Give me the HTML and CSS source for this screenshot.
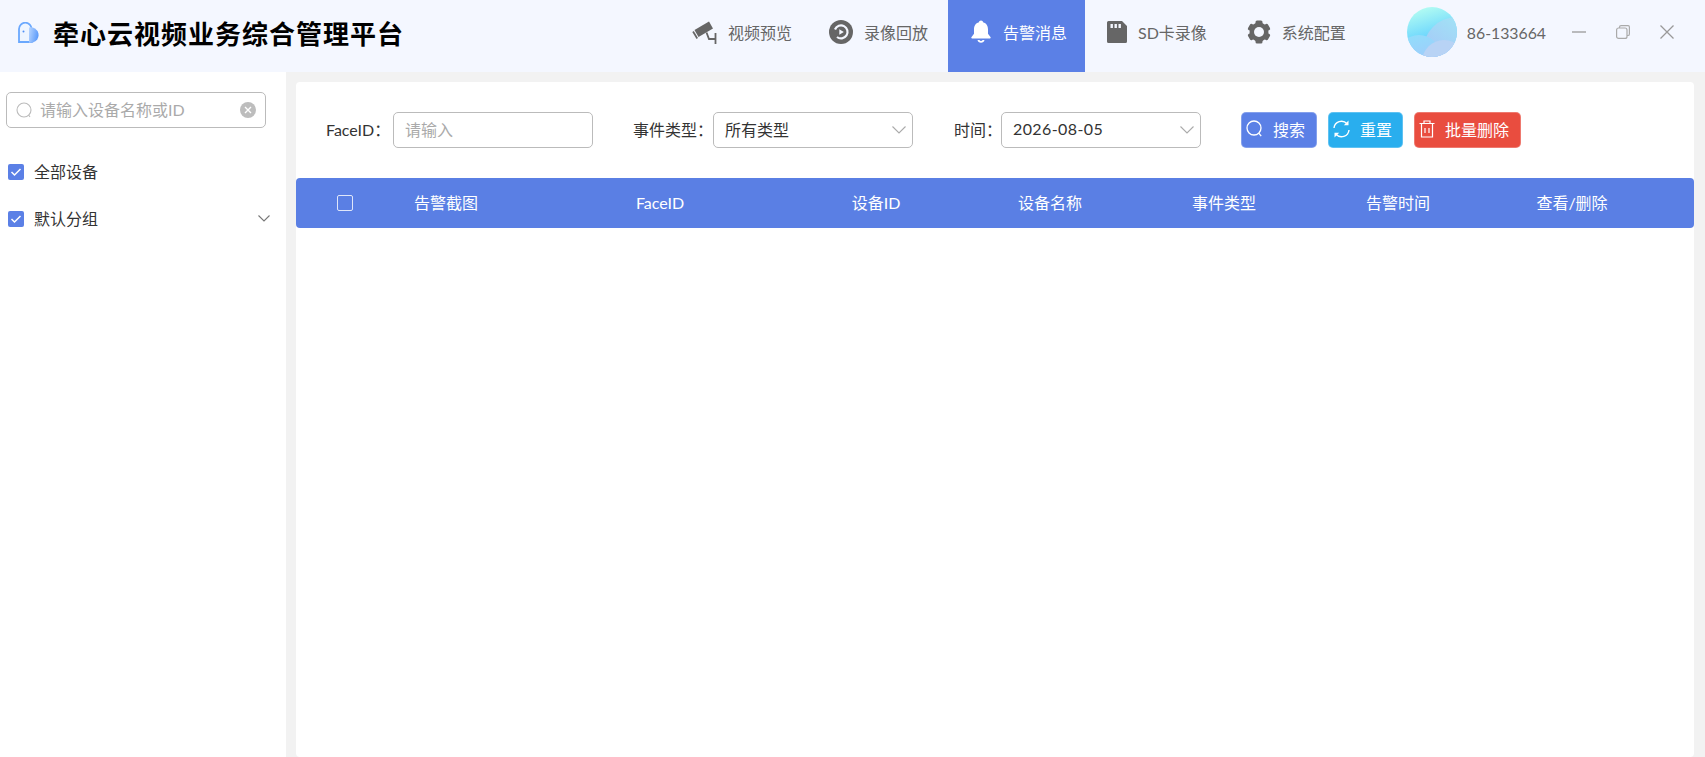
FILE: index.html
```html
<!DOCTYPE html>
<html lang="zh-CN">
<head>
  <meta charset="UTF-8">
  <meta name="viewport" content="width=device-width, initial-scale=1.0">
  <title>牵心云视频业务综合管理平台</title>
  <link rel="stylesheet" href="styles.css">
</head>
<body>
  <!-- Header Section -->
  <div class="header">
    <div class="brand">
      <svg class="logo" width="22" height="21" viewBox="0 0 22 21">
        <defs>
          <linearGradient id="logoBlue" x1="0" y1="0" x2="1" y2="0.300">
            <stop offset="0" stop-color="#b9d6ff"/>
            <stop offset="1" stop-color="#5f9dfb"/>
          </linearGradient>
        </defs>
        <path d="M1 20V7a6.300 6.300 0 0 1 12.600 0V20z" fill="#eef5ff" stroke="#6aa8fe" stroke-width="1.800"/>
        <path d="M11 5.500a7.500 7.500 0 0 1 3.500 15.200H11z" fill="url(#logoBlue)"/>
        <circle cx="5.500" cy="9.500" r="1" fill="#4e8ef5"/>
      </svg>
      <h1>牵心云视频业务综合管理平台</h1>
    </div>

    <div class="nav">
      <div class="nav-item">
        <svg width="25" height="23" viewBox="0 0 25 23">
          <path d="M2.500 9 17 0.500l4 7-14.500 8.500z" fill="#666"/>
          <path d="M0.300 11 4.500 18l1.500-0.900-4.200-7z" fill="#666"/>
          <path d="M14.500 11.500 17 18h6.500M23.500 12v11" fill="none" stroke="#666" stroke-width="1.800"/>
        </svg>
        <span>视频预览</span>
      </div>
      <div class="nav-item replay">
        <svg width="24" height="24" viewBox="0 0 24 24">
          <circle cx="12" cy="12" r="12" fill="#666"/>
          <path d="M6 9.500A6.500 6.500 0 1 1 8 17" fill="none" stroke="#f4f7ff" stroke-width="2.200"/>
          <path d="M10.300 9.300v5.400l4.500-2.700z" fill="#f4f7ff"/>
        </svg>
        <span>录像回放</span>
      </div>
      <div class="nav-item active">
        <svg width="20" height="24" viewBox="0 0 20 24">
          <path d="M10 0.500c1.200 0 2 .8 2 1.800 3.600.9 5 3.900 5 7.200v4.200l2.600 3.600c.3.600 0 1.200-.7 1.200H1.100c-.7 0-1-.6-.7-1.200L3 13.700V9.500c0-3.300 1.400-6.300 5-7.200 0-1 .8-1.800 2-1.800z" fill="#fff"/>
          <path d="M6.500 20a3.600 3.600 0 0 0 7 0h-1.900a1.800 1.800 0 0 1-3.200 0z" fill="#fff"/>
        </svg>
        <span>告警消息</span>
      </div>
      <div class="nav-item sdcard">
        <svg width="20" height="22" viewBox="0 0 20 22">
          <path d="M1.500 0H15l5 5v15.500a1.500 1.500 0 0 1-1.500 1.500h-17A1.500 1.500 0 0 1 0 20.500v-19A1.500 1.500 0 0 1 1.500 0z" fill="#666"/>
          <path d="M3.500 3h2.400v4H3.500zM7.500 3h2.400v4H7.500zM11.500 3h2.400v4h-2.400z" fill="#f4f7ff"/>
        </svg>
        <span>SD卡录像</span>
      </div>
      <div class="nav-item">
        <svg width="24" height="24" viewBox="0 0 24 24">
          <g fill="#666">
            <rect x="8.500" y="0.500" width="7" height="23" rx="1.500"/>
            <rect x="8.500" y="0.500" width="7" height="23" rx="1.500" transform="rotate(60 12 12)"/>
            <rect x="8.500" y="0.500" width="7" height="23" rx="1.500" transform="rotate(120 12 12)"/>
            <circle cx="12" cy="12" r="9.500"/>
          </g>
          <circle cx="12" cy="12" r="5" fill="#f4f7ff"/>
        </svg>
        <span>系统配置</span>
      </div>
    </div>

    <div class="user">
      <svg class="avatar" width="50" height="50" viewBox="0 0 50 50">
        <defs>
          <clipPath id="avatarClip"><circle cx="25" cy="25" r="25"/></clipPath>
          <linearGradient id="avatarBg" x1="0.3" y1="0" x2="0.6" y2="1">
            <stop offset="0" stop-color="#b4fdf2"/>
            <stop offset="0.55" stop-color="#70d8fd"/>
            <stop offset="1" stop-color="#7cc8fb"/>
          </linearGradient>
          <linearGradient id="avatarMid" x1="0.9" y1="0" x2="0.3" y2="1">
            <stop offset="0" stop-color="#9feaf5"/>
            <stop offset="1" stop-color="#a9bdf8"/>
          </linearGradient>
          <linearGradient id="avatarLow" x1="0" y1="0" x2="0.3" y2="1">
            <stop offset="0" stop-color="#90e0fb"/>
            <stop offset="1" stop-color="#a5c2fb"/>
          </linearGradient>
        </defs>
        <g clip-path="url(#avatarClip)">
          <rect width="50" height="50" fill="url(#avatarBg)"/>
          <circle cx="50" cy="44" r="34" fill="url(#avatarMid)"/>
          <circle cx="12" cy="50" r="22" fill="url(#avatarLow)"/>
          <circle cx="37" cy="55" r="22" fill="#b8d3f5"/>
        </g>
      </svg>
      <span class="phone">86-133664</span>
      <div class="win-btns">
        <svg width="14" height="14" viewBox="0 0 14 14"><path d="M0 7h14" stroke="#999" stroke-width="1.300"/></svg>
        <svg width="14" height="14" viewBox="0 0 14 14"><rect x="0.600" y="3" width="10.400" height="10.400" rx="2" fill="none" stroke="#aaa" stroke-width="1.200"/><path d="M3.500 3V2.200a1.600 1.600 0 0 1 1.600-1.600h7a1.300 1.300 0 0 1 1.300 1.300v7a1.600 1.600 0 0 1-1.600 1.600H11" fill="none" stroke="#aaa" stroke-width="1.200"/></svg>
        <svg width="14" height="14" viewBox="0 0 14 14"><path d="M0.500 0.500l13 13M13.500 0.500l-13 13" stroke="#999" stroke-width="1.300"/></svg>
      </div>
    </div>
  </div>

  <div class="page">
    <!-- Device Tree -->
    <div class="sidebar">
      <div class="tree-search">
        <svg width="16" height="16" viewBox="0 0 16 16"><circle cx="8" cy="8" r="7" fill="none" stroke="#bbb" stroke-width="1.100"/><path d="M12.500 13l1.500 1.800" stroke="#bbb" stroke-width="1.100"/></svg>
        <input class="tree-input" type="text" placeholder="请输入设备名称或ID">
        <svg width="16" height="16" viewBox="0 0 16 16"><circle cx="8" cy="8" r="8" fill="#bdbdbd"/><path d="M5 5l6 6M11 5l-6 6" stroke="#fff" stroke-width="1.400"/></svg>
      </div>
      <div class="tree-row">
        <span class="check"><svg width="12" height="10" viewBox="0 0 12 10"><path d="M1.500 5l3 3 6-6" fill="none" stroke="#fff" stroke-width="1.500"/></svg></span>
        <span class="tree-text">全部设备</span>
      </div>
      <div class="tree-row">
        <span class="check"><svg width="12" height="10" viewBox="0 0 12 10"><path d="M1.500 5l3 3 6-6" fill="none" stroke="#fff" stroke-width="1.500"/></svg></span>
        <span class="tree-text">默认分组</span>
        <svg class="tree-arrow" width="12" height="7" viewBox="0 0 12 7"><path d="M0.500 0.500 6 6l5.500-5.500" fill="none" stroke="#777" stroke-width="1.100"/></svg>
      </div>
    </div>

    <!-- Alarm List -->
    <div class="main">
      <div class="filters">
        <label class="filter-label">FaceID：</label>
        <div class="field"><span class="placeholder">请输入</span></div>
        <label class="filter-label type-label">事件类型：</label>
        <div class="field">
          <span>所有类型</span>
          <svg class="arrow" width="14" height="8" viewBox="0 0 14 8"><path d="M0.500 0.500 7 7l6.500-6.500" fill="none" stroke="#aaa" stroke-width="1.100"/></svg>
        </div>
        <label class="filter-label time-label">时间：</label>
        <div class="field">
          <span class="date-text">2026-08-05</span>
          <svg class="arrow" width="14" height="8" viewBox="0 0 14 8"><path d="M0.500 0.500 7 7l6.500-6.500" fill="none" stroke="#aaa" stroke-width="1.100"/></svg>
        </div>
        <div class="btn-group">
          <button class="btn btn-search">
            <svg width="17" height="18" viewBox="0 0 17 18"><circle cx="8" cy="8" r="7" fill="none" stroke="#fff" stroke-width="1.300"/><path d="M12.800 13.200l2.400 3" stroke="#fff" stroke-width="1.300"/></svg>
            <span>搜索</span>
          </button>
          <button class="btn btn-reset">
            <svg width="17" height="18" viewBox="0 0 17 18"><path d="M1 8a7.500 7.500 0 0 1 13-4.300M16 10a7.500 7.500 0 0 1-13 4.300" fill="none" stroke="#fff" stroke-width="1.400"/><path d="M15.500 0.500v4.700h-4.700zM1.500 17.500v-4.700h4.700z" fill="#fff"/></svg>
            <span>重置</span>
          </button>
          <button class="btn btn-delete">
            <svg width="16" height="18" viewBox="0 0 16 18"><path d="M0.500 3.500h15M5 3.500V1h6v2.500M2.500 3.500V17h11V3.500M6 8v5M10 8v5" fill="none" stroke="#fff" stroke-width="1.200"/></svg>
            <span>批量删除</span>
          </button>
        </div>
      </div>

      <div class="table-head">
        <div class="head-check"><span class="head-box"></span></div>
        <div>告警截图</div>
        <div>FaceID</div>
        <div>设备ID</div>
        <div>设备名称</div>
        <div>事件类型</div>
        <div>告警时间</div>
        <div>查看/删除</div>
      </div>
    </div>
  </div>
</body>
</html>
```

FILE: styles.css
```css
/* Global Styles */
* {
  margin: 0;
  padding: 0;
  box-sizing: border-box;
}

html, body {
  height: 100%;
  overflow: hidden;
}

body {
  font-family: Lato, 'Noto Sans CJK SC', sans-serif;
  font-size: 16px;
  color: #333;
  background-color: #f2f2f2;
  display: flex;
  flex-direction: column;
}

/* Header Section */
.header {
  height: 72px;
  flex: none;
  background-color: #f4f7ff;
  display: flex;
  align-items: center;
  padding-left: 18px;
  padding-right: 31px;
}

.brand {
  display: flex;
  align-items: center;
  padding-bottom: 8px;
}

.logo {
  margin-right: 13px;
}

.brand h1 {
  font-size: 26px;
  font-weight: 700;
  letter-spacing: 1px;
  color: #000;
}

.nav {
  display: flex;
  height: 72px;
  margin-left: auto;
}

.nav-item {
  display: flex;
  align-items: center;
  gap: 11px;
  padding: 0 20px 8px;
  color: #666;
}

.nav-item.replay {
  padding-left: 17px;
}

.nav-item.sdcard {
  padding-left: 22px;
}

.nav-item.active {
  background-color: #5b80e6;
  color: #fff;
  gap: 12px;
  padding: 0 18px 8px 23px;
}

.user {
  display: flex;
  align-items: center;
  margin-left: 41px;
  padding-bottom: 8px;
}

.phone {
  margin-left: 10px;
  color: #666;
  font-size: 15.8px;
}

.win-btns {
  display: flex;
  gap: 30px;
  margin-left: 26px;
}

/* Device Tree */
.page {
  flex: 1;
  display: flex;
  min-height: 0;
}

.sidebar {
  width: 286px;
  flex: none;
  background-color: #fff;
  padding: 20px 16px 0 6px;
}

.tree-search {
  width: 260px;
  height: 36px;
  border: 1px solid #bbb;
  border-radius: 5px;
  display: flex;
  align-items: center;
  padding: 0 9px;
  margin-bottom: 20px;
}

.tree-input {
  flex: 1;
  min-width: 0;
  border: none;
  outline: none;
  background: none;
  font: inherit;
  margin-left: 8px;
  padding-bottom: 2px;
}

.tree-input::placeholder {
  color: #aaa;
}

.tree-row {
  height: 47px;
  display: flex;
  align-items: center;
  gap: 10px;
  padding-left: 2px;
}

.tree-text {
  padding-bottom: 2px;
}

.check {
  width: 16px;
  height: 16px;
  border-radius: 2px;
  background-color: #5b80e6;
  display: flex;
  align-items: center;
  justify-content: center;
}

.tree-arrow {
  margin-left: auto;
}

/* Alarm List */
.main {
  flex: 1;
  margin: 10px 11px 0 10px;
  background-color: #fff;
  border-radius: 4px;
}

.filters {
  height: 96px;
  display: flex;
  align-items: center;
  padding: 0 0 0 30px;
}

.filter-label {
  width: 67px;
  color: #333;
  white-space: nowrap;
  padding-bottom: 3px;
}

.type-label {
  width: 80px;
  margin-left: 40px;
}

.time-label {
  width: 47px;
  margin-left: 41px;
}

.field {
  width: 200px;
  height: 36px;
  border: 1px solid #bbb;
  border-radius: 5px;
  display: flex;
  align-items: center;
  padding: 0 6px 3px 11px;
  background-color: #fff;
}

.placeholder {
  color: #aaa;
}

.date-text {
  letter-spacing: 0.4px;
}

.arrow {
  margin-left: auto;
  margin-top: 3px;
}

.btn-group {
  display: flex;
  gap: 11px;
  margin-left: 40px;
}

.btn {
  height: 36px;
  border: 1px solid rgba(255, 255, 255, 0.25);
  border-radius: 5px;
  color: #fff;
  font: inherit;
  white-space: nowrap;
  display: flex;
  align-items: center;
  gap: 10px;
  padding: 0 0 2px 4px;
}

.btn-search {
  background-color: #5b80e6;
  width: 76px;
}

.btn-reset {
  background-color: #29aeee;
  width: 75px;
}

.btn-delete {
  background-color: #e94d3f;
  width: 107px;
}

.table-head {
  height: 50px;
  width: 1398px;
  background-color: #5a7fe4;
  border-radius: 4px;
  color: #fff;
  display: grid;
  grid-template-columns: 65px 170px 258px repeat(5, 174px);
  align-items: center;
  text-align: center;
  padding-bottom: 2px;
}

.head-check {
  text-align: left;
  padding-left: 41px;
  padding-top: 2px;
  display: flex;
}

.head-box {
  width: 16px;
  height: 16px;
  border: 1px solid #dfe6fa;
  border-radius: 2px;
  flex: none;
}
```
